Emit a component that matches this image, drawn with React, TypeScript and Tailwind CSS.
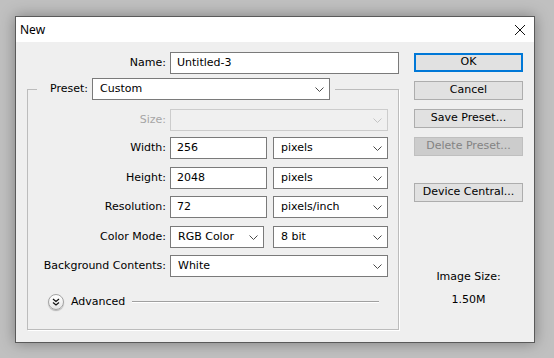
import React from 'react';

function Chevron({ color = '#4a4a4a' }: { color?: string }) {
  return (
    <svg width="9" height="5" viewBox="0 0 9 5" className="shrink-0">
      <path d="M0.5 0.5 L4.5 4.5 L8.5 0.5" fill="none" stroke={color} strokeWidth="1" />
    </svg>
  );
}

function Select({ value, className, disabled }: { value?: string; className: string; disabled?: boolean }) {
  return (
    <div
      className={
        'flex h-[22px] items-center justify-between border pl-[7px] pr-[5px] ' +
        (disabled ? 'border-[#cccccc] bg-[#f0f0f0]' : 'border-[#7a7a7a] bg-white') +
        ' ' +
        className
      }
    >
      <span>{value}</span>
      <Chevron color={disabled ? '#c4c4c4' : '#4a4a4a'} />
    </div>
  );
}

function Input({ value, className }: { value: string; className: string }) {
  return (
    <div className={'flex h-[22px] items-center border border-[#7a7a7a] bg-white pl-[6px] ' + className}>
      {value}
    </div>
  );
}

function Button({ label, primary, disabled }: { label: string; primary?: boolean; disabled?: boolean }) {
  let cls = 'border border-[#adadad] bg-[#e1e1e1] text-black';
  if (primary) cls = 'border-2 border-[#0078d7] bg-[#e1e1e1] text-black';
  if (disabled) cls = 'border border-[#bfbfbf] bg-[#cccccc] text-[#838383]';
  return <div className={'flex h-[19px] items-center justify-center ' + cls}>{label}</div>;
}

function Row({ label, disabled, className, children }: { label: string; disabled?: boolean; className: string; children: React.ReactNode }) {
  return (
    <div className={'flex h-[22px] items-center ' + className}>
      <div className={'w-[138px] text-right ' + (disabled ? 'text-[#a6a6a6]' : 'text-black')}>{label}</div>
      <div className="ml-[4px] flex">{children}</div>
    </div>
  );
}

export default function App() {
  return (
    <div className="h-[358px] w-[554px] overflow-hidden bg-[#c0c0c0] pl-[15px] pt-[16px] font-['DejaVu_Sans',sans-serif] text-[11px] text-black">
      <div className="h-[327px] w-[520px] border border-[#5a5a5a] bg-[#efefef] shadow-[0_0_14px_rgba(0,0,0,0.35)]">
        {/* title bar */}
        <div className="flex h-[25px] items-center justify-between bg-white pl-[4px] pr-[9px]">
          <span className="font-['Noto_Sans',sans-serif] text-[12px]">New</span>
          <svg width="10" height="10" viewBox="0 0 10 10">
            <path d="M0 0 L10 10 M10 0 L0 10" stroke="#111" strokeWidth="1" />
          </svg>
        </div>

        <div className="flex pl-[11px] pt-[10px]">
          {/* left side */}
          <div className="w-[372px]">
            <div className="flex h-[22px] items-center">
              <div className="w-[139px] text-right">Name:</div>
              <Input value="Untitled-3" className="ml-[4px] w-[229px]" />
            </div>

            <fieldset className="mt-[4px] h-[252px] border border-[#bcbcbc] shadow-[1px_1px_0_#ffffff]">
              <legend className="ml-[9px] flex items-center gap-[4px] pl-[13px] pr-[5px]">
                <span>Preset:</span>
                <Select value="Custom" className="w-[238px]" />
              </legend>

              <Row label="Size:" disabled className="mt-[9px]">
                <Select className="w-[218px]" disabled />
              </Row>
              <Row label="Width:" className="mt-[6px]">
                <Input value="256" className="w-[97px]" />
                <Select value="pixels" className="ml-[6px] w-[115px]" />
              </Row>
              <Row label="Height:" className="mt-[8px]">
                <Input value="2048" className="w-[97px]" />
                <Select value="pixels" className="ml-[6px] w-[115px]" />
              </Row>
              <Row label="Resolution:" className="mt-[7px]">
                <Input value="72" className="w-[97px]" />
                <Select value="pixels/inch" className="ml-[6px] w-[115px]" />
              </Row>
              <Row label="Color Mode:" className="mt-[8px]">
                <Select value="RGB Color" className="w-[94px]" />
                <Select value="8 bit" className="ml-[9px] w-[115px]" />
              </Row>
              <Row label="Background Contents:" className="mt-[7px]">
                <Select value="White" className="w-[218px]" />
              </Row>

              <div className="mt-[17px] flex h-[16px] items-center pl-[20px] pr-[19px]">
                <div className="flex h-[16px] w-[16px] items-center justify-center rounded-full border border-[#a3a3a3] bg-[linear-gradient(#ffffff,#e6e6e6)] shadow-[0_1px_1px_rgba(0,0,0,0.25)]">
                  <svg width="8" height="8" viewBox="0 0 8 8">
                    <path d="M1 1 L4 3.5 L7 1 M1 4.5 L4 7 L7 4.5" fill="none" stroke="#111" strokeWidth="1.2" />
                  </svg>
                </div>
                <span className="ml-[7px] text-[11px]">Advanced</span>
                <div className="ml-[7px] h-[2px] flex-1 border-t border-b border-t-[#a0a0a0] border-b-white" />
              </div>
            </fieldset>
          </div>

          {/* right side */}
          <div className="ml-[15px] flex w-[109px] flex-col pt-[1px]">
            <div className="flex flex-col gap-[9px]">
              <Button label="OK" primary />
              <Button label="Cancel" />
              <Button label="Save Preset..." />
              <Button label="Delete Preset..." disabled />
            </div>
            <div className="mt-[27px]">
              <Button label="Device Central..." />
            </div>
            <div className="mt-[68px] text-center leading-[13px]">Image Size:</div>
            <div className="mt-[10px] text-center leading-[13px]">1.50M</div>
          </div>
        </div>
      </div>
    </div>
  );
}
